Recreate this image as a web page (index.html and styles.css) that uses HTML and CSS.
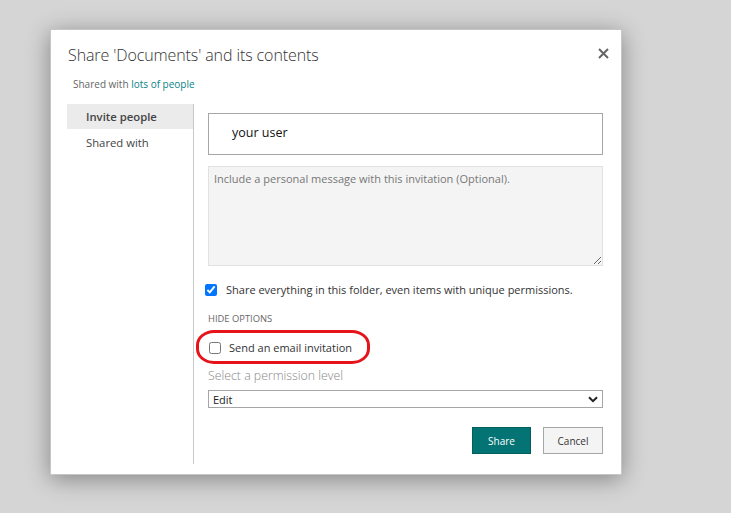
FILE: index.html
```html
<!DOCTYPE html>
<html>
<head>
<meta charset="utf-8">
<link rel="stylesheet" href="styles.css">
</head>
<body>
<div class="dialog">
  <div class="header">
    <h1 class="title">Share 'Documents' and its contents</h1>
    <button class="close" aria-label="Close">
      <svg width="11" height="11" viewBox="0 0 11 11"><path d="M1 1 L10 10 M10 1 L1 10" stroke="#666" stroke-width="2" fill="none"/></svg>
    </button>
  </div>
  <div class="subtitle">Shared with <a class="link">lots of people</a></div>
  <div class="body">
    <nav class="nav">
      <div class="nav-item active">Invite people</div>
      <div class="nav-item">Shared with</div>
    </nav>
    <div class="main">
      <div class="people-input">your user</div>
      <textarea class="message" placeholder="Include a personal message with this invitation (Optional)."></textarea>
      <label class="check-row share-all">
        <input type="checkbox" checked>
        <span>Share everything in this folder, even items with unique permissions.</span>
      </label>
      <div class="hide-options">HIDE OPTIONS</div>
      <div class="email-wrap">
        <label class="check-row email">
          <input type="checkbox">
          <span>Send an email invitation</span>
        </label>
        <span class="highlight"></span>
      </div>
      <div class="perm-label">Select a permission level</div>
      <div class="select">
        <span>Edit</span>
        <svg width="10" height="7" viewBox="0 0 10 7"><path d="M1 1.2 L5 5.2 L9 1.2" stroke="#222" stroke-width="2" fill="none"/></svg>
      </div>
      <div class="buttons">
        <button class="btn primary">Share</button>
        <button class="btn">Cancel</button>
      </div>
    </div>
  </div>
</div>
</body>
</html>
```
FILE: styles.css
```css
html, body {
  margin: 0;
  height: 100%;
}
body {
  background: #d5d5d5;
  font-family: "Open Sans", "Noto Sans", sans-serif;
  padding: 29px 0 0 50px;
  box-sizing: border-box;
  overflow: hidden;
}
.dialog {
  width: 572px;
  height: 446px;
  box-sizing: border-box;
  background: #fff;
  border: 1px solid #c6c6c6;
  box-shadow: 0 4px 22px rgba(0,0,0,0.38);
  position: relative;
}
.header {
  display: flex;
  justify-content: space-between;
  align-items: flex-start;
  padding: 13px 12px 0 17px;
}
.title {
  margin: 0;
  font-size: 16px;
  font-weight: 300;
  color: #333;
  line-height: 24px;
  letter-spacing: -0.1px;
}
.close {
  background: none;
  border: 0;
  padding: 0;
  margin-top: 5px;
  width: 11px;
  height: 11px;
  display: flex;
}
.subtitle {
  padding: 10px 0 0 22px;
  font-size: 10px;
  color: #666;
  line-height: 14px;
}
.link {
  color: #0a8387;
}
.body {
  display: flex;
  margin: 13px 18px 0 16px;
}
.nav {
  width: 126px;
  height: 360px;
  border-right: 1px solid #c8c8c8;
}
.nav-item {
  font-size: 11.3px;
  color: #444;
  padding: 0 0 0 19px;
  height: 25px;
  line-height: 25px;
}
.nav-item.active {
  background: #ebebeb;
  font-weight: 600;
  margin-bottom: 1px;
}
.main {
  flex: 1;
  padding: 9px 0 0 14px;
  display: flex;
  flex-direction: column;
}
.people-input {
  height: 42px;
  box-sizing: border-box;
  border: 1px solid #a6a6a6;
  padding: 0 0 0 23px;
  line-height: 38px;
  font-size: 12.5px;
  color: #111;
}
.message {
  margin: 11px 0 0;
  height: 100px;
  box-sizing: border-box;
  border: 1px solid #e1e1e1;
  background: #f4f4f4;
  font-family: inherit;
  font-size: 11px;
  padding: 4px 5px;
  resize: vertical;
  display: block;
  width: 100%;
}
.message::placeholder {
  color: #777;
}
.check-row {
  display: flex;
  align-items: center;
  font-size: 11px;
  color: #333;
}
.check-row input {
  margin: 0;
  width: 12px;
  height: 12px;
}
.share-all {
  margin: 17px 0 0 -3px;
  gap: 9px;
  height: 13px;
}
.hide-options {
  margin-top: 17px;
  font-size: 9.4px;
  color: #666;
  line-height: 12px;
}
.email-wrap {
  position: relative;
  margin-top: 16px;
  height: 13px;
}
.email {
  gap: 8px;
  margin-left: 1px;
  height: 13px;
}
.highlight {
  position: absolute;
  left: -12px;
  top: -11px;
  width: 174px;
  height: 34px;
  box-sizing: border-box;
  border: 3px solid #e6131b;
  border-radius: 18px / 15px;
  pointer-events: none;
}
.perm-label {
  margin-top: 16px;
  font-size: 12.3px;
  font-weight: 300;
  color: #888;
  line-height: 11px;
}
.select {
  margin-top: 9px;
  height: 18px;
  box-sizing: border-box;
  border: 1px solid #a6a6a6;
  display: flex;
  align-items: center;
  justify-content: space-between;
  padding: 0 4px 0 4px;
  font-size: 11px;
  color: #222;
}
.buttons {
  display: flex;
  justify-content: flex-end;
  gap: 12px;
  margin-top: 19px;
}
.btn {
  width: 60px;
  height: 27px;
  box-sizing: border-box;
  border: 1px solid #a6a6a6;
  background: #f4f4f4;
  font-family: inherit;
  font-size: 10px;
  color: #333;
  padding: 0;
}
.btn.primary {
  width: 59px;
  background: #037373;
  border-color: #025f5f;
  color: #fff;
}
```
